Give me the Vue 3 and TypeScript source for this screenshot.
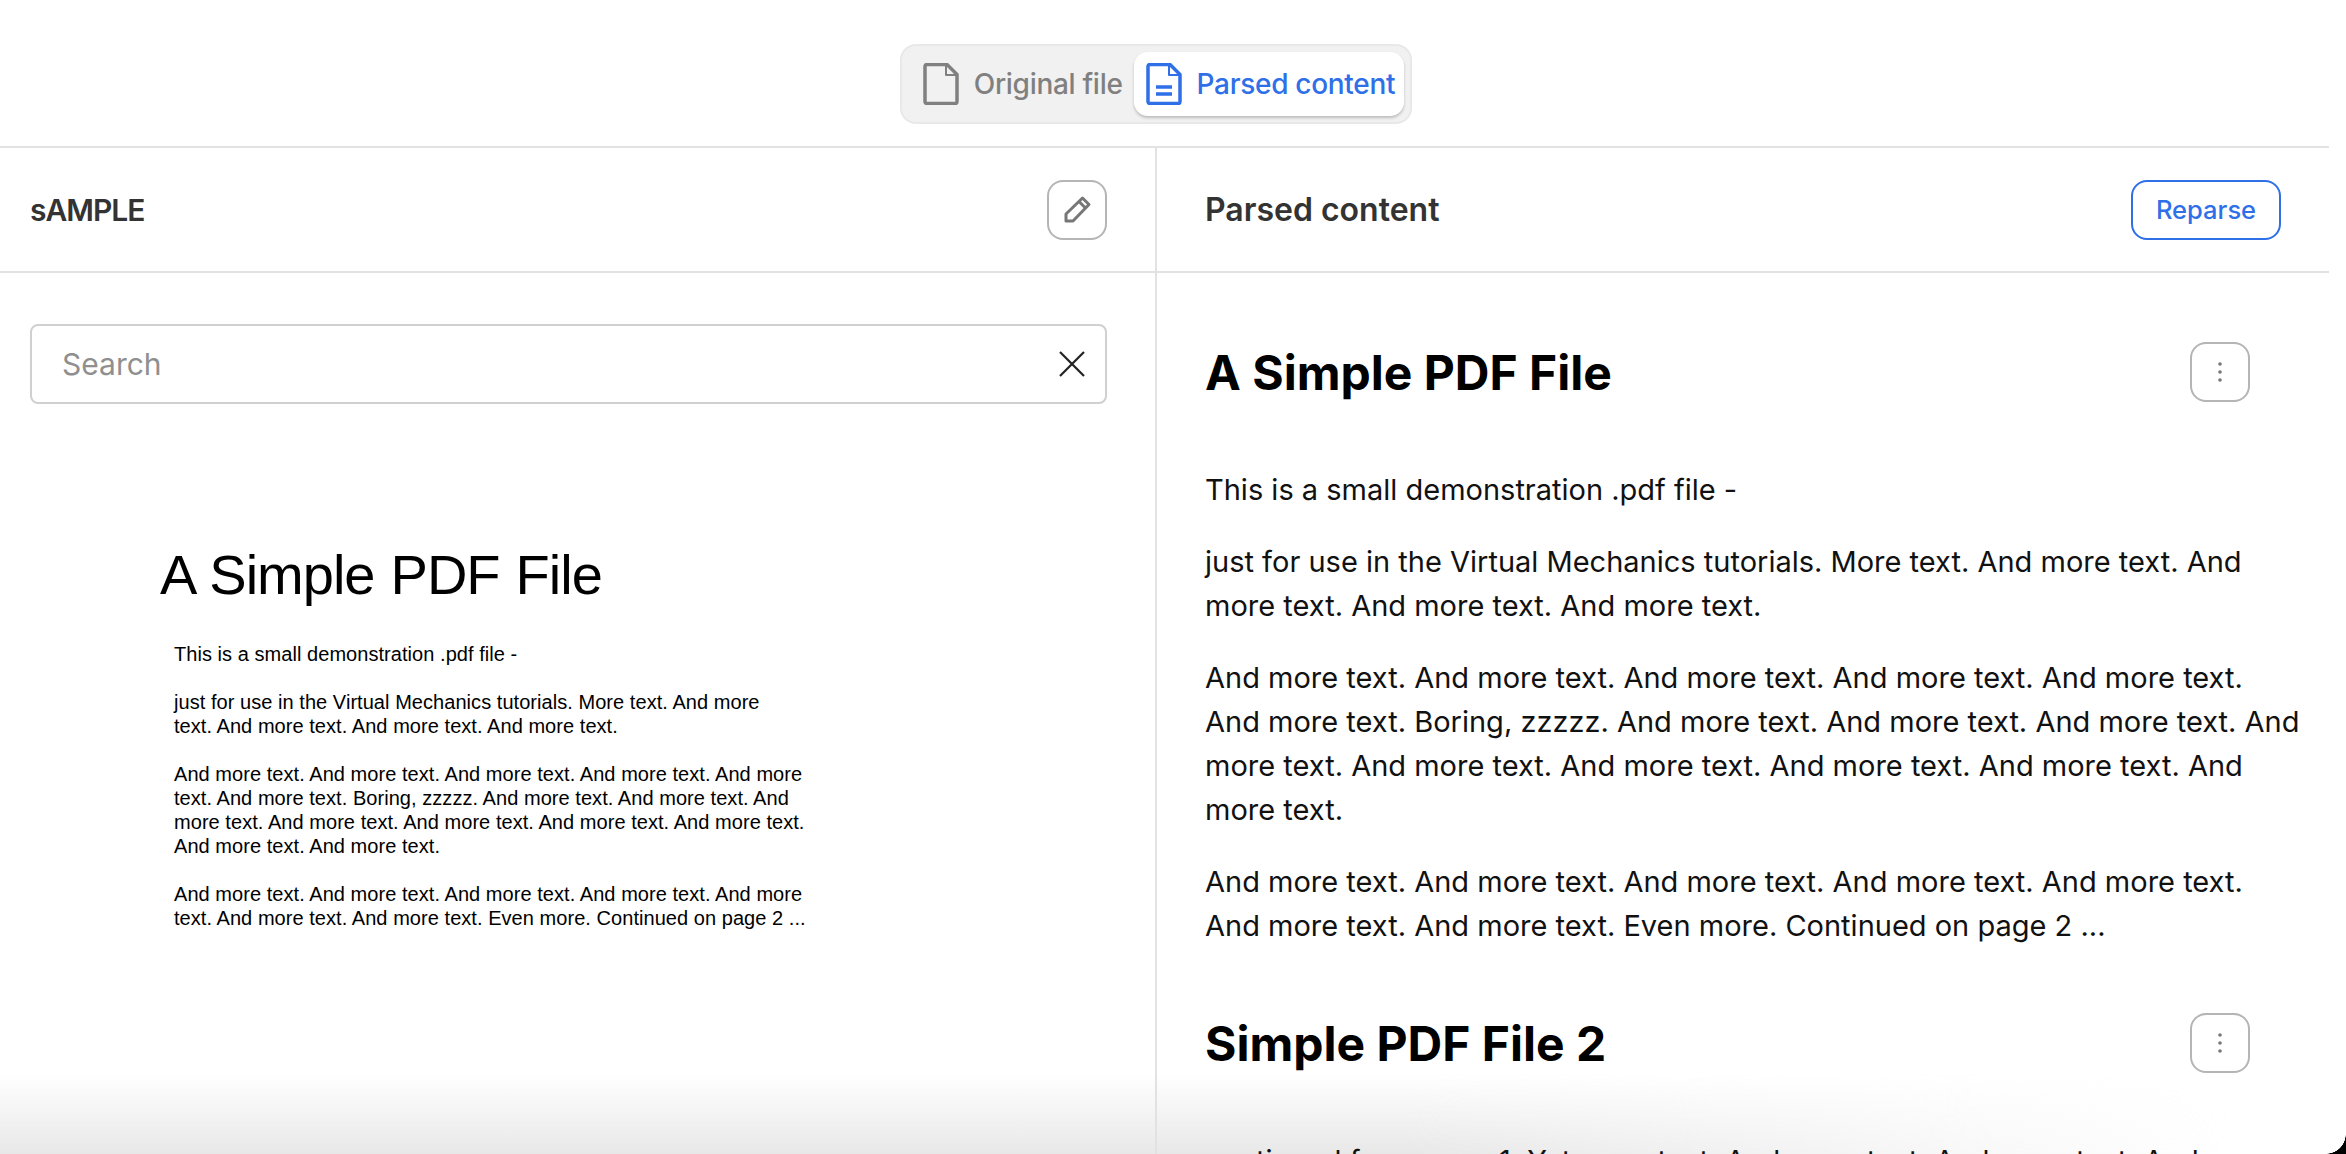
<script setup lang="ts">
const pdfParagraphs: string[][] = [
  ['This is a small demonstration .pdf file -'],
  ['just for use in the Virtual Mechanics tutorials. More text. And more', 'text. And more text. And more text. And more text.'],
  [
    'And more text. And more text. And more text. And more text. And more',
    'text. And more text. Boring, zzzzz. And more text. And more text. And',
    'more text. And more text. And more text. And more text. And more text.',
    'And more text. And more text.',
  ],
  ['And more text. And more text. And more text. And more text. And more', 'text. And more text. And more text. Even more. Continued on page 2 ...'],
];

const parsedParagraphs: string[][] = [
  ['This is a small demonstration .pdf file -'],
  ['just for use in the Virtual Mechanics tutorials. More text. And more text. And', 'more text. And more text. And more text.'],
  [
    'And more text. And more text. And more text. And more text. And more text.',
    'And more text. Boring, zzzzz. And more text. And more text. And more text. And',
    'more text. And more text. And more text. And more text. And more text. And',
    'more text.',
  ],
  ['And more text. And more text. And more text. And more text. And more text.', 'And more text. And more text. Even more. Continued on page 2 ...'],
];
</script>

<template>
  <div class="page">
    <div class="fade"></div>
    <div class="content">
      <div class="top-bar">
        <div class="toggle">
          <div class="tab">
            <svg width="36" height="42" viewBox="0 0 36 42" fill="none" stroke="currentColor" stroke-width="3.5" stroke-linejoin="round">
              <path d="M2 3.5a2 2 0 0 1 2-2h20l10 10v27a2 2 0 0 1-2 2H4a2 2 0 0 1-2-2z" />
              <path d="M23 2v10h10" stroke-width="2" />
            </svg>
            <span>Original file</span>
          </div>
          <div class="tab active">
            <svg width="36" height="42" viewBox="0 0 36 42" fill="none" stroke="currentColor" stroke-width="3.5" stroke-linejoin="round">
              <path d="M2 3.5a2 2 0 0 1 2-2h20l10 10v27a2 2 0 0 1-2 2H4a2 2 0 0 1-2-2z" />
              <path d="M23 2v10h10" stroke-width="2" />
              <path d="M10 24h16M10 31h16" />
            </svg>
            <span>Parsed content</span>
          </div>
        </div>
      </div>

      <div class="columns">
        <section class="col left">
          <header class="col-head">
            <h2 class="doc-name">sAMPLE</h2>
            <button class="icon-btn">
              <svg width="30" height="30" viewBox="0 0 30 30" fill="none" stroke="#777" stroke-width="3" stroke-linejoin="round">
                <path d="M4 19L20.5 3 27 9.5 11 26H4z" />
                <path d="M17 6.5l6.5 6.5" />
              </svg>
            </button>
          </header>
          <div class="viewer">
            <div class="search">
              <span class="placeholder">Search</span>
              <svg width="26" height="26" viewBox="0 0 26 26" stroke="#222" stroke-width="2.2" fill="none">
                <path d="M1 1l24 24M25 1L1 25" />
              </svg>
            </div>
            <div class="pdf">
              <div class="pdf-title">A Simple PDF File</div>
              <p v-for="(lines, i) in pdfParagraphs" :key="i" class="pdf-par">
                <span v-for="line in lines" :key="line" class="line">{{ line }}</span>
              </p>
            </div>
          </div>
        </section>

        <section class="col right">
          <header class="col-head">
            <h2>Parsed content</h2>
            <button class="reparse">Reparse</button>
          </header>
          <div class="parsed">
            <div class="section-head first">
              <h1>A Simple PDF File</h1>
              <button class="icon-btn more">
                <svg width="6" height="22" viewBox="0 0 6 22" fill="#777">
                  <circle cx="3" cy="3" r="1.8" /><circle cx="3" cy="11" r="1.8" /><circle cx="3" cy="19" r="1.8" />
                </svg>
              </button>
            </div>
            <p v-for="(lines, i) in parsedParagraphs" :key="i" class="parsed-par">
              <span v-for="line in lines" :key="line" class="line">{{ line }}</span>
            </p>
            <div class="section-head">
              <h1>Simple PDF File 2</h1>
              <button class="icon-btn more">
                <svg width="6" height="22" viewBox="0 0 6 22" fill="#777">
                  <circle cx="3" cy="3" r="1.8" /><circle cx="3" cy="11" r="1.8" /><circle cx="3" cy="19" r="1.8" />
                </svg>
              </button>
            </div>
            <p class="parsed-par">
              <span class="line">continued from page 1. Yet more text. And more text. And more text. And</span>
            </p>
          </div>
        </section>
      </div>
    </div>
    <div class="corner"></div>
  </div>
</template>

<style>
html, body { margin: 0; background: #fff; overflow: hidden; }
</style>

<style scoped>
.page {
  position: relative;
  width: 2346px;
  height: 1154px;
  overflow: hidden;
  background: #fff;
  font-family: Inter, "Noto Sans", sans-serif;
}

.content {
  position: relative;
}

.top-bar {
  display: flex;
  justify-content: center;
  width: 2329px;
  height: 148px;
  padding: 44px 17px 0 0;
  box-sizing: border-box;
  border-bottom: 2px solid #e2e2e2;
}

.toggle {
  display: flex;
  align-items: center;
  height: 80px;
  padding: 0 6px 0 21px;
  box-sizing: border-box;
  background: #f1f1f1;
  border: 2px solid #e8e8e8;
  border-radius: 16px;
}

.tab {
  display: flex;
  align-items: center;
  gap: 15px;
  height: 64px;
  font-size: 28px;
  font-weight: 500;
  color: #808080;
  letter-spacing: -0.3px;
  white-space: nowrap;
}

.tab.active {
  margin-left: 11px;
  padding: 0 9px 0 12px;
  color: #2f6fe8;
  background: #fff;
  border-radius: 14px;
  box-shadow: 0 2px 3px rgba(0, 0, 0, 0.22);
}

.columns {
  display: flex;
  width: 2329px;
  height: 1006px;
}

.col { height: 100%; }
.left { width: 1155px; flex: none; border-right: 2px solid #e2e2e2; }
.right { flex: 1; min-width: 0; }

.col-head {
  display: flex;
  align-items: center;
  justify-content: space-between;
  height: 125px;
  box-sizing: border-box;
  border-bottom: 2px solid #e2e2e2;
}

.left .col-head { padding: 0 48px 0 30px; }
.right .col-head { padding: 0 48px 0 48px; }

h2 {
  margin: 0;
  font-size: 32px;
  font-weight: 600;
  color: #333;
}

.doc-name {
  font-size: 30px;
  letter-spacing: -1px;
}

.icon-btn {
  display: flex;
  align-items: center;
  justify-content: center;
  width: 60px;
  height: 60px;
  padding: 0;
  background: transparent;
  border: 2px solid #b5b5b5;
  border-radius: 16px;
}

.reparse {
  width: 150px;
  height: 60px;
  padding: 0;
  font-family: inherit;
  font-size: 25.5px;
  font-weight: 500;
  color: #2f6fe8;
  background: transparent;
  border: 2px solid #2f6fe8;
  border-radius: 16px;
}

.viewer { padding: 51px 48px 0 30px; }

.search {
  display: flex;
  align-items: center;
  justify-content: space-between;
  height: 80px;
  padding: 0 20px 0 30px;
  box-sizing: border-box;
  border: 2px solid #d0d0d0;
  border-radius: 8px;
}

.placeholder {
  font-size: 30px;
  color: #8f8f8f;
}

.pdf {
  padding: 139px 0 0 130px;
  font-family: "Liberation Sans", Arial, sans-serif;
  color: #000;
}

.pdf-title {
  margin-bottom: 35px;
  font-size: 56px;
  line-height: 64px;
  letter-spacing: -1px;
  word-spacing: 1.5px;
}

.pdf-par {
  margin: 0 0 24px 14px;
  font-size: 20px;
  line-height: 24px;
  letter-spacing: 0.05px;
}

.line {
  display: block;
  white-space: nowrap;
}

.parsed { padding: 0 79px 0 48px; }

.section-head {
  display: flex;
  align-items: center;
  justify-content: space-between;
  height: 60px;
  margin: 65px 0 66px;
}

.section-head.first { margin-top: 69px; }

h1 {
  margin: 0;
  font-size: 48px;
  font-weight: 700;
  color: #000;
}

.more { width: 60px; }

.parsed-par {
  margin: 0 0 28px;
  font-size: 29px;
  line-height: 44px;
  color: #111;
}

.fade {
  position: absolute;
  left: 0;
  right: 0;
  bottom: 0;
  height: 80px;
  background: linear-gradient(to bottom, rgba(232, 232, 232, 0), rgba(232, 232, 232, 1));
  -webkit-mask-image: linear-gradient(to right, #000 60%, transparent 95%);
  mask-image: linear-gradient(to right, #000 60%, transparent 95%);
}

.corner {
  position: absolute;
  right: 0;
  bottom: 0;
  width: 20px;
  height: 20px;
  background: radial-gradient(circle at top left, transparent 19.5px, #000 20px);
}
</style>
